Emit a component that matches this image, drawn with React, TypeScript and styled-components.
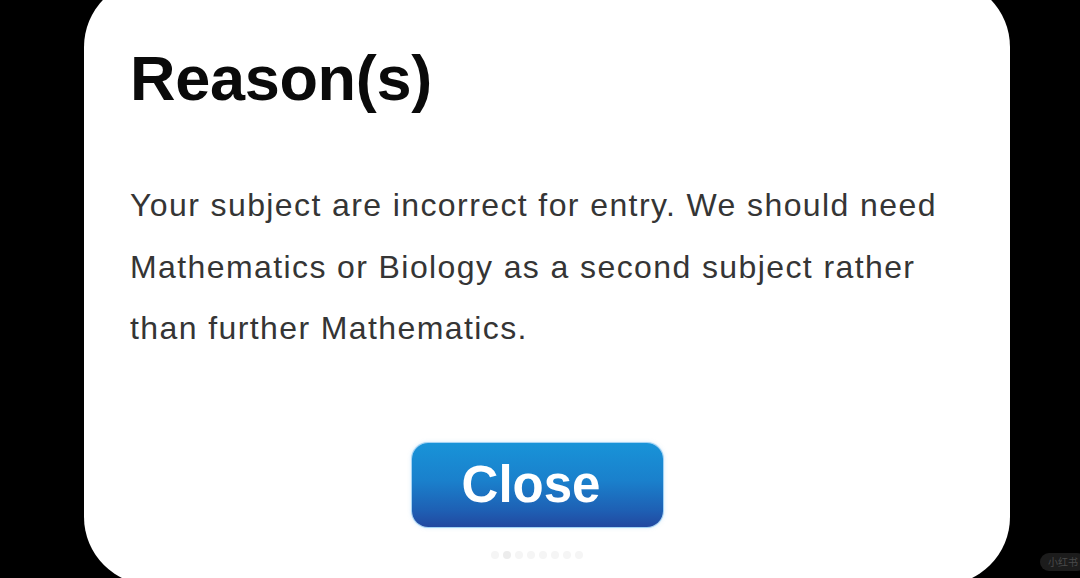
import React from "react";
import styled, { createGlobalStyle } from "styled-components";

const GlobalStyle = createGlobalStyle`
  html, body {
    margin: 0;
    padding: 0;
    background: #000;
  }
  body {
    width: 1080px;
    height: 578px;
    overflow: hidden;
    font-family: "Liberation Sans", Arial, Helvetica, sans-serif;
  }
`;

const Screen = styled.div`
  position: relative;
  width: 1080px;
  height: 578px;
  background: #000;
  overflow: hidden;
`;

const Card = styled.div`
  box-sizing: border-box;
  margin: -21px 0 0 84px;
  width: 926px;
  height: 606px;
  border-radius: 68px;
  background: #fff;
  padding: 68px 40px 0 46px;
  display: flex;
  flex-direction: column;
`;

const Title = styled.h1`
  margin: 0;
  font-size: 63px;
  line-height: 63px;
  font-weight: 700;
  color: #0a0a0a;
  letter-spacing: -0.3px;
`;

const Message = styled.p`
  margin: 65px 0 0;
  font-size: 32px;
  line-height: 61.5px;
  font-weight: 400;
  letter-spacing: 1.4px;
  color: #353535;
  max-width: 830px;
`;

const ButtonRow = styled.div`
  margin-top: 83px;
  display: flex;
  flex-direction: column;
  align-items: center;
  padding-right: 26px;
`;

const CloseButton = styled.button`
  width: 251px;
  height: 84px;
  border: none;
  border-radius: 16px;
  background: linear-gradient(180deg, #1893d8 0%, #1a80cc 45%, #1e60b4 80%, #2248a0 100%);
  box-shadow: 0 0 0 1px rgba(120, 190, 240, 0.6), 0 0 4px rgba(120, 190, 240, 0.5);
  color: #fff;
  font-family: "Liberation Sans", Arial, sans-serif;
  font-size: 51px;
  font-weight: 700;
  padding: 0 12px 0 0;
  cursor: pointer;
`;

const Dots = styled.div`
  display: flex;
  gap: 4px;
  margin-top: 24px;
`;

const Dot = styled.span<{ $active?: boolean }>`
  width: 8px;
  height: 8px;
  border-radius: 50%;
  background: ${(p) => (p.$active ? "#ececec" : "#f5f5f5")};
`;

const Watermark = styled.div`
  position: absolute;
  right: -6px;
  bottom: 7px;
  height: 18px;
  padding: 0 8px;
  border-radius: 9px;
  background: #1c1c1c;
  color: #4a4a4a;
  font-size: 10px;
  line-height: 18px;
  font-family: "Noto Sans CJK SC", sans-serif;
`;

export default function App() {
  return (
    <Screen>
      <GlobalStyle />
      <Card>
        <Title>Reason(s)</Title>
        <Message>
          Your subject are incorrect for entry. We should need Mathematics or Biology as a second subject rather
          than further Mathematics.
        </Message>
        <ButtonRow>
          <CloseButton>Close</CloseButton>
          <Dots>
            {[0, 1, 2, 3, 4, 5, 6, 7].map((i) => (
              <Dot key={i} $active={i === 1} />
            ))}
          </Dots>
        </ButtonRow>
      </Card>
      <Watermark>小红书</Watermark>
    </Screen>
  );
}
